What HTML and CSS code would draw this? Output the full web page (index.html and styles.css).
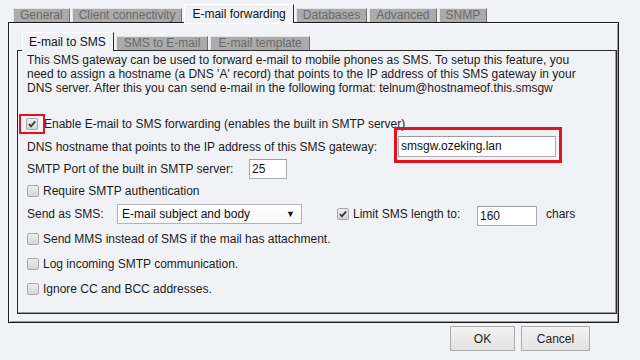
FILE: index.html
```html
<!DOCTYPE html>
<html lang="en">
<head>
  <meta charset="UTF-8">
  <title>E-mail forwarding</title>
  <link rel="stylesheet" href="styles.css">
</head>
<body>
  <div class="dialog">
    <div class="tabs outer-tabs">
      <div class="tab">General</div>
      <div class="tab">Client connectivity</div>
      <div class="tab active">E-mail forwarding</div>
      <div class="tab">Databases</div>
      <div class="tab">Advanced</div>
      <div class="tab">SNMP</div>
    </div>
    <div class="outer-panel">
      <div class="tabs inner-tabs">
        <div class="tab active">E-mail to SMS</div>
        <div class="tab">SMS to E-mail</div>
        <div class="tab">E-mail template</div>
      </div>
      <div class="inner-panel">
        <p class="intro">This SMS gateway can be used to forward e-mail to mobile phones as SMS. To setup this feature, you need to assign a hostname (a DNS 'A' record) that points to the IP address of this SMS gateway in your DNS server. After this you can send e-mail in the following format: telnum@hostnameof.this.smsgw</p>

        <div class="row row-enable">
          <span class="cb checked marked"><svg viewBox="0 0 12 12"><path d="M3 6.2 L5 8.4 L9.2 3.4" /></svg></span>
          <span class="lbl-enable">Enable E-mail to SMS forwarding (enables the built in SMTP server)</span>
        </div>
        <div class="row row-dns">
          <span class="lbl" style="width:371px">DNS hostname that points to the IP address of this SMS gateway:</span>
          <span class="marked-box"><span class="field dns">smsgw.ozeking.lan</span></span>
        </div>
        <div class="row row-port">
          <span class="lbl" style="width:222px">SMTP Port of the built in SMTP server:</span>
          <span class="field port">25</span>
        </div>
        <div class="row row-auth">
          <span class="cb"></span>
          <span class="cb-text">Require SMTP authentication</span>
        </div>
        <div class="row row-send">
          <span class="lbl" style="width:90px">Send as SMS:</span>
          <span class="select">E-mail subject and body<span class="arrow">▼</span></span>
          <span class="cb checked limit-cb"><svg viewBox="0 0 12 12"><path d="M3 6.2 L5 8.4 L9.2 3.4" /></svg></span>
          <span class="cb-text limit-text">Limit SMS length to:</span>
          <span class="field len">160</span>
          <span class="chars">chars</span>
        </div>
        <div class="row row-opt">
          <span class="cb"></span>
          <span class="cb-text">Send MMS instead of SMS if the mail has attachment.</span>
        </div>
        <div class="row row-opt">
          <span class="cb"></span>
          <span class="cb-text">Log incoming SMTP communication.</span>
        </div>
        <div class="row row-opt">
          <span class="cb"></span>
          <span class="cb-text">Ignore CC and BCC addresses.</span>
        </div>
      </div>
    </div>
    <div class="buttons">
      <button class="btn ok">OK</button>
      <button class="btn cancel">Cancel</button>
    </div>
  </div>
</body>
</html>
```

FILE: styles.css
```css
body {
  margin: 0;
  background: #f1f2f6;
  font-family: 'Liberation Sans', Arial, sans-serif;
  font-size: 12px;
  color: #1c1c1c;
}
.dialog {
  padding: 5px 0 0 8px;
}
.tabs {
  display: flex;
  align-items: flex-end;
  position: relative;
  z-index: 2;
}
.tab {
  height: 13px;
  line-height: 13px;
  padding: 0 6px;
  margin-right: 2px;
  background: #ababab;
  color: #6a6a6a;
  border-left: 1px solid #e4e4e4;
  border-top: 1px solid #e4e4e4;
  border-right: 1px solid #6c6c6c;
  white-space: nowrap;
}
.tab.active {
  background: #f1f2f6;
  color: #111;
  height: 18px;
  line-height: 19px;
  margin-bottom: -1px;
  border-left-color: #fff;
  border-top-color: #fff;
  border-right-color: #2a2a2a;
}
.outer-tabs {
  padding-left: 5px;
  height: 17px;
}
.outer-tabs .tab {
  padding: 0 6px;
}
.outer-tabs .tab.active {
  padding: 0 7px;
}
.outer-panel {
  border: 1px solid #1a1a1a;
  box-shadow: inset 1px 1px 0 #fff, inset -1px -1px 0 #9a9a9a;
  padding: 8px 0 0 8px;
  box-sizing: border-box;
  width: 611px;
  height: 301px;
}
.inner-tabs {
  padding-left: 5px;
  height: 19px;
}
.inner-tabs .tab {
  padding: 0 7px;
}
.inner-tabs .tab.active {
  padding: 0 7px 0 6px;
}
.inner-panel {
  width: 600px;
  height: 264px;
  box-sizing: border-box;
  border: 1px solid #2a2a2a;
  box-shadow: inset -1px -1px 0 #9a9a9a;
  padding: 2px 9px 0 9px;
}
.intro {
  margin: 0 12px 17px 0;
  line-height: 14px;
}
.row {
  display: flex;
  align-items: center;
  height: 23px;
}
.row-port, .row-auth {
  height: 22px;
}
.row-send {
  height: 24px;
}
.row-opt {
  height: 25px;
}
.lbl {
  flex: none;
}
.lbl-enable {
  white-space: nowrap;
}
.cb {
  flex: none;
  width: 10px;
  height: 10px;
  border: 1px solid #a9a9a9;
  border-radius: 2px;
  background: linear-gradient(#ececec, #d6d6d6);
  margin-right: 4px;
  position: relative;
}
.cb svg {
  position: absolute;
  left: -1px;
  top: -1px;
  width: 12px;
  height: 12px;
  fill: none;
  stroke: #3a3a3a;
  stroke-width: 1.8;
}
.marked::before {
  content: "";
  position: absolute;
  left: -8px;
  right: -8px;
  top: -5px;
  bottom: -5px;
  border: 2px solid #e3141f;
}
.row-enable .cb {
  margin-left: -1px;
  margin-right: 6px;
}
.field {
  flex: none;
  box-sizing: border-box;
  height: 21px;
  line-height: 19px;
  background: #fff;
  border: 1px solid #abadb3;
  border-top-color: #9a9ca3;
  padding: 0 2px;
  color: #111;
}
.marked-box {
  position: relative;
  display: flex;
}
.marked-box::before {
  content: "";
  position: absolute;
  left: -4px;
  right: -6px;
  top: -9px;
  bottom: -6px;
  border: 3px solid #e3141f;
}
.dns {
  width: 158px;
}
.port {
  width: 38px;
  height: 20px;
}
.select {
  flex: none;
  box-sizing: border-box;
  width: 185px;
  height: 20px;
  line-height: 18px;
  border: 1px solid #b3b3b3;
  background: linear-gradient(#fff, #f7f7f7);
  padding: 0 4px;
  position: relative;
  display: flex;
  justify-content: space-between;
  color: #111;
}
.arrow {
  font-size: 9px;
  margin-right: 2px;
}
.limit-cb {
  margin-left: 35px;
}
.limit-text {
  width: 124px;
}
.len {
  width: 60px;
  height: 20px;
  margin-top: 3px;
}
.chars {
  margin-left: 9px;
}
.buttons {
  display: flex;
  padding: 3px 0 0 442px;
}
.btn {
  font-family: 'Liberation Sans', Arial, sans-serif;
  font-size: 12px;
  color: #1c1c1c;
  height: 25px;
  border: 1px solid #acacac;
  border-radius: 0;
  background: linear-gradient(#f2f2f2, #e3e3e3);
  margin-right: 6px;
  padding: 0;
}
.ok {
  width: 65px;
}
.cancel {
  width: 69px;
}
```
